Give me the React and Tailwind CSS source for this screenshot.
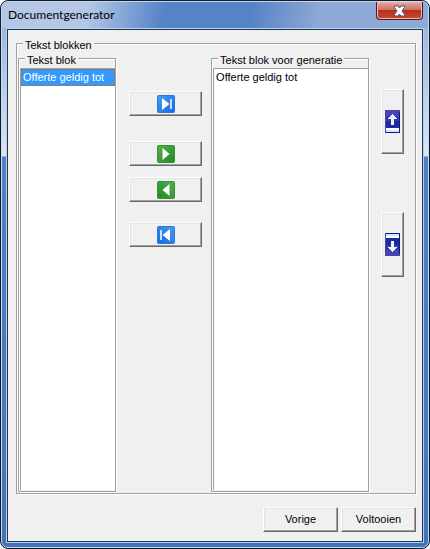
import React, { useState } from "react";

const raised =
  "bg-[#f0f0f0] border border-t-white border-l-white border-r-[#696969] border-b-[#696969] shadow-[inset_-1px_-1px_#a0a0a0,inset_1px_1px_#e3e3e3]";

const etched =
  "min-w-0 border border-[#a0a0a0] shadow-[1px_1px_#fff,inset_1px_1px_#fff]";

const legend =
  "ml-[5px] h-[14px] px-0.5 pt-0.5 bg-[#f0f0f0] leading-[14px] whitespace-nowrap";

const SkipIcon = ({ color, bar, left }) => (
  <svg width="18" height="18" viewBox="0 0 18 18" className={left ? "-scale-x-100" : ""}>
    <defs>
      <linearGradient id={`${color}Fill`} x1="0" y1="0" x2="1" y2="1">
        <stop offset="0" stopColor={color === "blue" ? "#4a9cf8" : "#55b050"} />
        <stop offset="1" stopColor={color === "blue" ? "#1268e0" : "#1f8a22"} />
      </linearGradient>
    </defs>
    <rect x="0.5" y="0.5" width="17" height="17" rx="1" fill={`url(#${color}Fill)`} stroke={color === "blue" ? "#2a78d8" : "#3a8f3a"} />
    <path d={bar ? "M5 3L12.500 9L5 15Z" : "M5.500 3L12.500 9L5.500 15Z"} fill="#fff" />
    {bar && <path d="M13 4h2v10h-2z" fill="#c4deff" />}
  </svg>
);

const MoveIcon = ({ down }) => (
  <svg width="15" height="23" viewBox="0 0 15 23">
    <g transform={down ? "matrix(1 0 0 -1 0 23)" : undefined}>
      <path d="M0 0h15v23H0z" fill="#4a43b0" />
      <path d="M1 6h13v5H1z" fill="#3a38a8" />
      <path d="M1 11h13v7H1z" fill="#1c2c98" />
      <path d="M14 2h1v21H1v-1h13z" fill="#0a1a88" />
      <path d="M1 18h13v4H1z" fill="#d4e6ff" />
      <path d="M1 18h13v2H1z" fill="#fff" />
      <path d="M7 4h1v1h1v1h1v1h1v1h1v1H9v6H6V9H3V8h1V7h1V6h1V5h1z" fill="#e8f6ff" />
    </g>
  </svg>
);

const TextBlockList = ({ title, items, value, onChange, className }) => {
  const handleChange = (e) => {
    onChange(Array.from(e.target.selectedOptions, (option) => option.value));
  };

  return (
    <fieldset className={`${etched} flex flex-col pt-[3px] pl-px pb-px ${className}`}>
      <legend className={legend}>{title}</legend>
      <select
        multiple
        size={2}
        aria-label={title}
        value={value}
        onChange={handleChange}
        className="block w-full min-h-0 flex-1 appearance-none rounded-none border-t border-l border-[#a0a0a0] bg-white p-0 text-black outline-none"
      >
        {items.map((item) => (
          <option
            key={item}
            className="h-[17px] min-h-0 border border-dotted border-transparent px-px pt-px pb-0 leading-[15px] checked:border-[#cc6600] checked:bg-[linear-gradient(#3399ff,#3399ff)] checked:text-white"
          >
            {item}
          </option>
        ))}
      </select>
    </fieldset>
  );
};

const App = () => {
  const [available, setAvailable] = useState(["Offerte geldig tot"]);
  const [chosen, setChosen] = useState([]);

  const transfer = `${raised} flex h-[25px] w-full items-center justify-center`;
  const order = `${raised} flex h-[65px] w-full items-center justify-center`;
  const footer = `${raised} h-[25px] w-[75px]`;

  return (
    <div className="flex h-screen min-h-96 flex-col overflow-hidden rounded-lg border border-[#141c2c] bg-[linear-gradient(#8faedb_0px,#dce6f4_155px,#5080c8_156px,#4474b8_100%)] font-['Liberation_Sans',Arial,sans-serif] text-[11px] text-black">
      <div className="flex min-h-0 flex-1 flex-col rounded-[7px] border border-[#c4d8f0] px-[4px] pb-[4px]">
        <header className="-mx-[4px] flex h-[26px] items-start justify-between rounded-t-md bg-[linear-gradient(100deg,#b4c8e6_0%,#b4c8e6_20%,#5583c6_38%,#5583c6_58%,#8faad6_75%,#8faad6_100%)] pl-1.5 pr-[5px]">
          <h1 className="pt-[3px] font-['Lato',sans-serif] text-xs leading-5">Documentgenerator</h1>
          <button
            aria-label="Sluiten"
            className="flex h-[18px] w-[47px] items-center justify-center rounded-b border border-t-0 border-[#4c1c20] bg-[linear-gradient(#e4aaa0_0%,#cf7264_45%,#b8301c_50%,#c84830_100%)] shadow-[inset_0_0_0_1px_#f0b8a8]"
          >
            <svg width="13" height="12" viewBox="0 0 13 12">
              <path d="M1.500 1h3.500l1.500 2L8 1h3.500v1.500L9 6l2.500 3.500V11H8L6.500 9L5 11H1.500V9.500L4 6L1.500 2.500z" fill="#fff" stroke="#4c5268" />
            </svg>
          </button>
        </header>

        <div className="flex min-h-0 flex-1 flex-col border border-[#b4d0ec]">
          <main className="flex min-h-0 flex-1 flex-col border border-[#203858] bg-[#f0f0f0] pt-1.5 pr-1.5 pb-[9px] pl-2">
            <fieldset className={`${etched} flex min-h-0 flex-1 flex-col p-px`}>
              <legend className={legend}>Tekst blokken</legend>
              <div className="flex min-h-0 flex-1">
                <TextBlockList
                  title="Tekst blok"
                  items={["Offerte geldig tot"]}
                  value={available}
                  onChange={setAvailable}
                  className="flex-[97]"
                />
                <div className="ml-[13px] flex w-[73px] flex-col pt-10">
                  <button aria-label="Alles toevoegen" className={transfer}><SkipIcon color="blue" bar /></button>
                  <button aria-label="Toevoegen" className={`${transfer} mt-[25px]`}><SkipIcon color="green" /></button>
                  <button aria-label="Verwijderen" className={`${transfer} mt-[11px]`}><SkipIcon color="green" left /></button>
                  <button aria-label="Alles verwijderen" className={`${transfer} mt-5`}><SkipIcon color="blue" bar left /></button>
                </div>
                <TextBlockList
                  title="Tekst blok voor generatie"
                  items={["Offerte geldig tot"]}
                  value={chosen}
                  onChange={setChosen}
                  className="ml-[9px] flex-[158]"
                />
                <div className="mr-[10px] ml-3 flex w-[23px] flex-col gap-[58px] pt-[38px]">
                  <button aria-label="Omhoog" className={order}><MoveIcon /></button>
                  <button aria-label="Omlaag" className={order}><MoveIcon down /></button>
                </div>
              </div>
            </fieldset>
            <footer className="mt-[13px] flex justify-end gap-[3px]">
              <button className={footer}>Vorige</button>
              <button className={footer}>Voltooien</button>
            </footer>
          </main>
        </div>
      </div>
    </div>
  );
};

export default App;
